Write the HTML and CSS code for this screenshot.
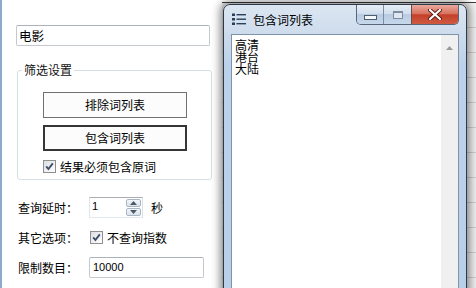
FILE: index.html
```html
<!DOCTYPE html>
<html lang="zh">
<head>
<meta charset="utf-8">
<title>包含词列表</title>
<link rel="stylesheet" href="styles.css">
</head>
<body>
<div class="desktop">
  <div class="leftpane">
    <div class="textbox search">电影</div>
    <fieldset class="group">
      <legend>筛选设置</legend>
      <div class="btn">排除词列表</div>
      <div class="btn btn-default">包含词列表</div>
      <label class="check-row">
        <span class="checkbox"><svg viewBox="0 0 11 11" width="11" height="11"><path d="M2.2 5.4 L4.4 8 L8.8 2.4" fill="none" stroke="#3f4f6c" stroke-width="1.9"/></svg></span>
        <span>结果必须包含原词</span>
      </label>
    </fieldset>
    <div class="row first">
      <span class="label">查询延时：</span>
      <div class="spin">
        <span class="spin-val">1</span>
        <div class="spin-arrows">
          <span class="arr up"><svg viewBox="0 0 7 4" width="7" height="4"><path d="M0 4 L3.5 0 L7 4Z" fill="#4d5866"/></svg></span>
          <span class="arr down"><svg viewBox="0 0 7 4" width="7" height="4"><path d="M0 0 L3.5 4 L7 0Z" fill="#4d5866"/></svg></span>
        </div>
      </div>
      <span class="unit">秒</span>
    </div>
    <div class="row">
      <span class="label">其它选项：</span>
      <label class="check-inline">
        <span class="checkbox"><svg viewBox="0 0 11 11" width="11" height="11"><path d="M2.2 5.4 L4.4 8 L8.8 2.4" fill="none" stroke="#3f4f6c" stroke-width="1.9"/></svg></span>
        <span>不查询指数</span>
      </label>
    </div>
    <div class="row">
      <span class="label">限制数目：</span>
      <div class="textbox limit">10000</div>
    </div>
    <div class="row">
      <span class="label">保存路径：</span>
    </div>
  </div>
  <div class="behind"></div>

  <div class="dialog">
    <div class="titlebar">
      <svg class="app-icon" viewBox="0 0 14 13" width="14" height="13">
        <rect x="0" y="0.5" width="3" height="2.5" fill="#2c3e58"/>
        <rect x="0" y="5" width="3" height="2.5" fill="#2c3e58"/>
        <rect x="0" y="9.5" width="3" height="2.5" fill="#2c3e58"/>
        <rect x="4.5" y="1" width="9.5" height="1.4" fill="#2c3e58"/>
        <rect x="4.5" y="5.5" width="9.5" height="1.4" fill="#2c3e58"/>
        <rect x="4.5" y="10" width="9.5" height="1.4" fill="#2c3e58"/>
      </svg>
      <span class="title">包含词列表</span>
      <div class="caption">
        <span class="cbtn cmin"><span class="min-glyph"></span></span>
        <span class="cbtn cmax"><span class="max-glyph"></span></span>
        <span class="cbtn cclose"><svg viewBox="0 0 14 11" width="14" height="11"><path d="M2 1 L12 10 M12 1 L2 10" stroke="#5a1a12" stroke-width="4" stroke-linecap="round"/><path d="M2 1 L12 10 M12 1 L2 10" stroke="#ffffff" stroke-width="2.2" stroke-linecap="round"/></svg></span>
      </div>
    </div>
    <div class="client">
      <div class="list">高清<br>港台<br>大陆</div>
      <div class="vscroll">
        <svg class="sarrow" viewBox="0 0 7 4" width="7" height="4"><path d="M0 4 L3.5 0 L7 4Z" fill="#9a9a9a"/></svg>
      </div>
    </div>
  </div>
</div>
</body>
</html>
```
FILE: styles.css
```css
html, body {
  margin: 0;
  padding: 0;
}
body {
  width: 476px;
  height: 288px;
  overflow: hidden;
  background: #ffffff;
  font-family: "Noto Sans CJK SC", "Liberation Sans", sans-serif;
  font-size: 12px;
  color: #000;
}
.desktop {
  position: relative;
  display: flex;
  height: 288px;
  overflow: hidden;
  border-left: 2px solid #8eaacb;
}
.leftpane {
  width: 220px;
  flex: none;
  box-sizing: border-box;
  padding: 25px 0 0 14px;
}
.textbox {
  box-sizing: border-box;
  height: 21px;
  border: 1px solid #c4c9cf;
  border-top-color: #adb2b8;
  border-radius: 2px;
  background: #fff;
  line-height: 19px;
}
.search {
  width: 194px;
  padding-left: 2px;
  font-size: 12.5px;
}
.group {
  margin: 16px 0 0 1px;
  width: 195px;
  box-sizing: border-box;
  border: 1px solid #d5dfe5;
  border-radius: 3px;
  padding: 0 0 5px 0;
  min-width: 0;
}
.group legend {
  margin-left: 4px;
  padding: 0 2px;
  line-height: 16px;
  font-size: 12px;
  color: #111;
}
.btn {
  box-sizing: border-box;
  width: 144px;
  height: 26px;
  margin: 14px 0 0 25px;
  border: 1px solid #707070;
  background: #fcfcfc;
  text-align: center;
  line-height: 24px;
  font-size: 12px;
}
.btn-default {
  margin-top: 7px;
  border: 2px solid #363636;
  line-height: 22px;
}
.check-row {
  display: flex;
  align-items: center;
  gap: 4px;
  height: 16px;
  margin: 7px 0 0 25px;
}
.checkbox {
  box-sizing: border-box;
  width: 13px;
  height: 13px;
  flex: none;
  border: 1px solid #8e8f8f;
  background: linear-gradient(135deg, #dadde2 0%, #f6f6f6 70%, #ffffff 100%);
  display: flex;
  align-items: center;
  justify-content: center;
}
.row {
  display: flex;
  align-items: center;
  height: 21px;
  margin: 9px 0 0 2px;
}
.row.first {
  margin-top: 17px;
}
.label {
  width: 71px;
  flex: none;
  font-size: 12px;
}
.spin {
  box-sizing: border-box;
  width: 54px;
  height: 21px;
  border: 1px solid #abadb3;
  border-color: #abadb3 #dbdfe6 #e3e9ef #e2e3ea;
  display: flex;
  align-items: stretch;
  background: #fff;
}
.spin-val {
  flex: 1;
  padding-left: 2px;
  font-family: "Liberation Sans", sans-serif;
  font-size: 11px;
  line-height: 17px;
}
.spin-arrows {
  width: 15px;
  display: flex;
  flex-direction: column;
  gap: 1px;
  padding: 1px 1px 1px 0;
}
.arr {
  flex: 1;
  box-sizing: border-box;
  border: 1px solid #a9b6c6;
  border-radius: 2px;
  background: linear-gradient(#f3f6fa, #dbe3ec);
  display: flex;
  align-items: center;
  justify-content: center;
}
.unit {
  margin-left: 8px;
}
.check-inline {
  display: flex;
  align-items: center;
  gap: 4px;
  margin-left: 1px;
}
.limit {
  width: 115px;
  padding-left: 3px;
  font-family: "Liberation Sans", sans-serif;
  font-size: 11px;
}
.behind {
  flex: 1;
  margin-top: 2px;
  border-top: 1px solid #3d3d3d;
  background: repeating-linear-gradient(to bottom, #f2f2f2 0 24px, #d0d0d0 24px 25px);
}
.dialog {
  position: absolute;
  left: 221px;
  top: 4px;
  width: 244px;
  height: 300px;
  box-sizing: border-box;
  border: 1px solid #2e3947;
  border-radius: 7px 7px 0 0;
  background: linear-gradient(to bottom, #dce6f2 0, #cddcec 28px, #bcd2ea 60px, #b8cfe8 100%);
  box-shadow: 0 0 9px 3px rgba(0, 0, 0, 0.45);
  display: flex;
  flex-direction: column;
}
.titlebar {
  height: 29px;
  flex: none;
  display: flex;
  align-items: flex-start;
  padding: 0 7px 0 8px;
}
.app-icon {
  margin-top: 8px;
  flex: none;
}
.title {
  margin: 7px 0 0 7px;
  font-size: 12px;
  line-height: 16px;
  color: #000;
}
.caption {
  margin-left: auto;
  display: flex;
  height: 20px;
  box-sizing: border-box;
  border: 1px solid #57667a;
  border-top: none;
  border-radius: 0 0 5px 5px;
  overflow: hidden;
}
.cbtn {
  display: flex;
  align-items: center;
  justify-content: center;
  height: 100%;
}
.cmin {
  width: 26px;
  background: linear-gradient(to bottom, #e6edf6 0, #d2dfee 45%, #b9cbe1 50%, #c7d8ec 100%);
  border-right: 1px solid #7d8ea3;
}
.cmax {
  width: 27px;
  background: linear-gradient(to bottom, #e6edf6 0, #d2dfee 45%, #b9cbe1 50%, #c7d8ec 100%);
  border-right: 1px solid #6d4a44;
}
.cclose {
  width: 46px;
  background: linear-gradient(to bottom, #e9a89c 0, #d7735f 45%, #c4402b 52%, #cf5a41 100%);
}
.min-glyph {
  width: 11px;
  height: 3px;
  margin-top: 5px;
  background: #f4f7fb;
  border: 1px solid #505d6e;
}
.max-glyph {
  width: 8px;
  height: 5px;
  border: 1px solid #7e8ca0;
  border-top-width: 2px;
  background: #dfe7f1;
}
.client {
  flex: 1;
  margin: 0 7px;
  border: 1px solid #7f93ab;
  background: #fff;
  display: flex;
}
.list {
  flex: 1;
  padding: 4px 3px;
  font-size: 12px;
  line-height: 12px;
}
.vscroll {
  width: 17px;
  flex: none;
  background: #f0f0f0;
  display: flex;
  justify-content: center;
}
.sarrow {
  margin-top: 11px;
}
```
